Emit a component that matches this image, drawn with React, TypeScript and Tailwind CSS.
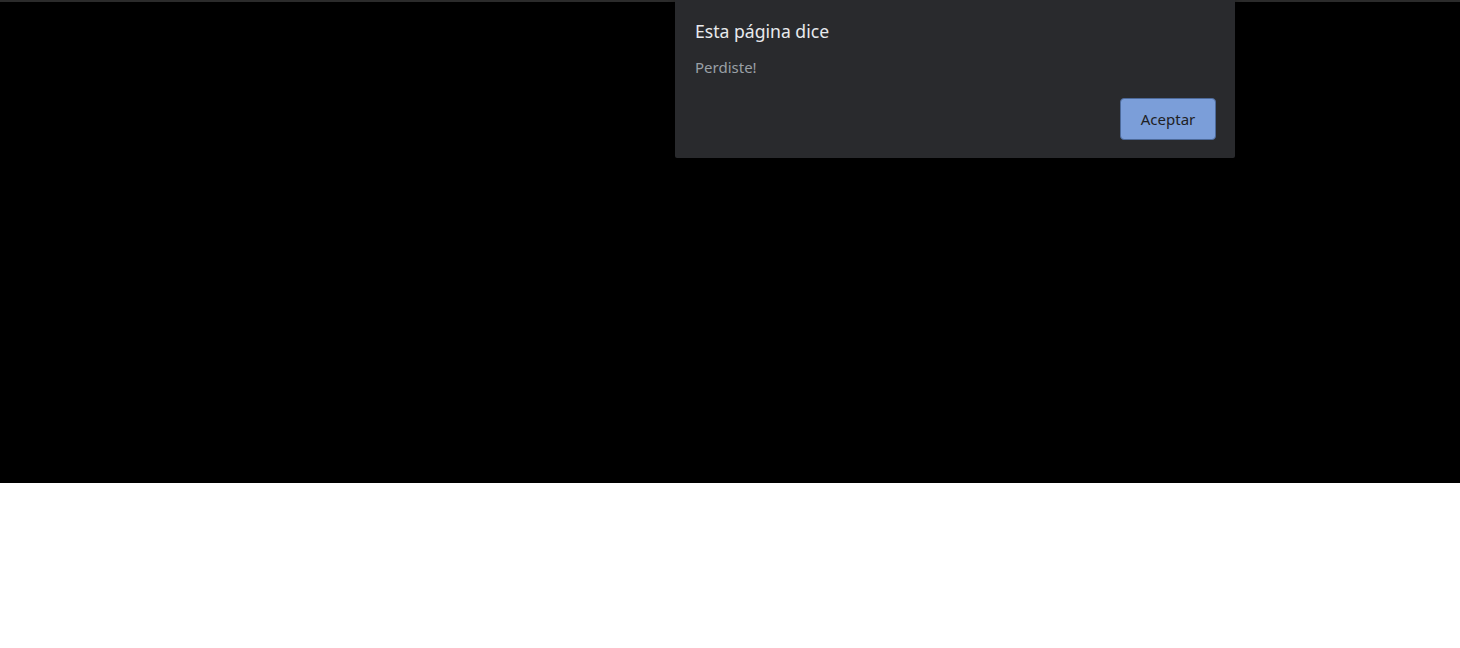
export default function App() {
  return (
    <div className="relative w-[1460px] h-[648px] bg-white font-['Noto_Sans','Open_Sans',sans-serif]">
      {/* page area */}
      <div className="h-[483px] bg-black border-t-2 border-[#2b2b2b]" />

      {/* alert dialog */}
      <div className="absolute left-[675px] top-0 w-[560px] h-[158px] bg-[#292a2d] rounded-b-[2px] shadow-[0_2px_6px_rgba(0,0,0,0.6)] pl-5 pr-[19px] pt-[17px]">
        <h1 className="text-[17.6px] leading-[28px] text-[#e8eaed]">Esta página dice</h1>
        <p className="mt-[12px] text-[15px] leading-[20px] text-[#9aa0a6]">Perdiste!</p>
        <div className="flex justify-end mt-[21px]">
          <button className="w-[96px] h-[42px] rounded-[4px] bg-[#7b9ed9] border border-[#4d6a9a] text-[15px] text-[#202124]">
            Aceptar
          </button>
        </div>
      </div>
    </div>
  )
}
